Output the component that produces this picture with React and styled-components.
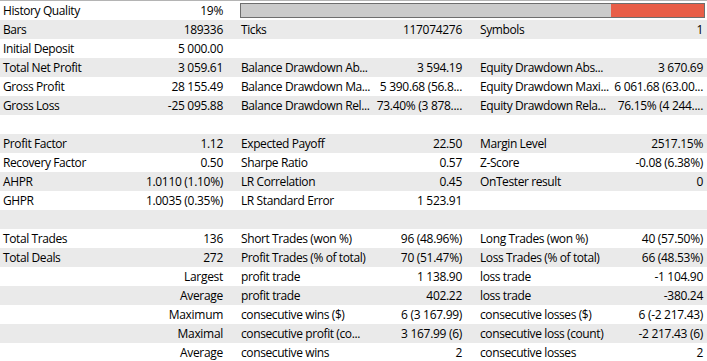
import React from 'react';
import styled, { createGlobalStyle } from 'styled-components';

const GlobalStyle = createGlobalStyle`
  html, body {
    margin: 0;
    padding: 0;
    background: #ffffff;
  }
  body {
    font-family: "Open Sans", "Noto Sans", sans-serif;
    font-size: 12px;
    color: #000000;
  }
`;

const Report = styled.div`
  width: 707px;
  height: 361px;
  overflow: hidden;
  border-top: 1px solid #b4b4b4;
  box-sizing: border-box;
`;

const Row = styled.div`
  display: grid;
  grid-template-columns: 130px 100px 141px 98px 140px 98px;
  height: 19px;
  align-items: center;
  background: ${p => (p.$shaded ? '#eaeaea' : '#ffffff')};
`;

const Label = styled.div`
  padding-left: ${p => (p.$first ? '3px' : '11px')};
  white-space: nowrap;
  overflow: hidden;
  line-height: 19px;
  letter-spacing: -0.4px;
`;

const Value = styled.div`
  text-align: right;
  padding-right: ${p => (p.$last ? '4px' : '7px')};
  white-space: nowrap;
  overflow: hidden;
  line-height: 19px;
  letter-spacing: -0.3px;
`;

const QualityBar = styled.div`
  grid-column: 3 / 7;
  margin: 0 2px 0 10px;
  height: 15px;
  border: 1px solid #6e6e6e;
  box-sizing: border-box;
  background: #cbcbcb;
  display: flex;
  justify-content: flex-end;
`;

const QualityFill = styled.div`
  height: 100%;
  background: #e85e48;
`;

const rows = [
  null,
  ['Bars', '189336', 'Ticks', '117074276', 'Symbols', '1'],
  ['Initial Deposit', '5 000.00', '', '', '', ''],
  ['Total Net Profit', '3 059.61', 'Balance Drawdown Ab...', '3 594.19', 'Equity Drawdown Abs...', '3 670.69'],
  ['Gross Profit', '28 155.49', 'Balance Drawdown Ma...', '5 390.68 (56.8...', 'Equity Drawdown Maxi...', '6 061.68 (63.00...'],
  ['Gross Loss', '-25 095.88', 'Balance Drawdown Rel...', '73.40% (3 878....', 'Equity Drawdown Rela...', '76.15% (4 244....'],
  ['', '', '', '', '', ''],
  ['Profit Factor', '1.12', 'Expected Payoff', '22.50', 'Margin Level', '2517.15%'],
  ['Recovery Factor', '0.50', 'Sharpe Ratio', '0.57', 'Z-Score', '-0.08 (6.38%)'],
  ['AHPR', '1.0110 (1.10%)', 'LR Correlation', '0.45', 'OnTester result', '0'],
  ['GHPR', '1.0035 (0.35%)', 'LR Standard Error', '1 523.91', '', ''],
  ['', '', '', '', '', ''],
  ['Total Trades', '136', 'Short Trades (won %)', '96 (48.96%)', 'Long Trades (won %)', '40 (57.50%)'],
  ['Total Deals', '272', 'Profit Trades (% of total)', '70 (51.47%)', 'Loss Trades (% of total)', '66 (48.53%)'],
  ['', 'Largest', 'profit trade', '1 138.90', 'loss trade', '-1 104.90'],
  ['', 'Average', 'profit trade', '402.22', 'loss trade', '-380.24'],
  ['', 'Maximum', 'consecutive wins ($)', '6 (3 167.99)', 'consecutive losses ($)', '6 (-2 217.43)'],
  ['', 'Maximal', 'consecutive profit (co...', '3 167.99 (6)', 'consecutive loss (count)', '-2 217.43 (6)'],
  ['', 'Average', 'consecutive wins', '2', 'consecutive losses', '2'],
];

export default function App() {
  const quality = 19;
  return (
    <>
      <GlobalStyle />
      <Report>
        {rows.map((r, i) =>
          r === null ? (
            <Row key={i}>
              <Label $first>History Quality</Label>
              <Value>{quality}%</Value>
              <QualityBar>
                <QualityFill style={{ width: `${quality + 1}%` }} />
              </QualityBar>
            </Row>
          ) : (
            <Row key={i} $shaded={i % 2 === 1}>
              <Label $first>{r[0]}</Label>
              <Value>{r[1]}</Value>
              <Label>{r[2]}</Label>
              <Value>{r[3]}</Value>
              <Label>{r[4]}</Label>
              <Value $last>{r[5]}</Value>
            </Row>
          )
        )}
      </Report>
    </>
  );
}
